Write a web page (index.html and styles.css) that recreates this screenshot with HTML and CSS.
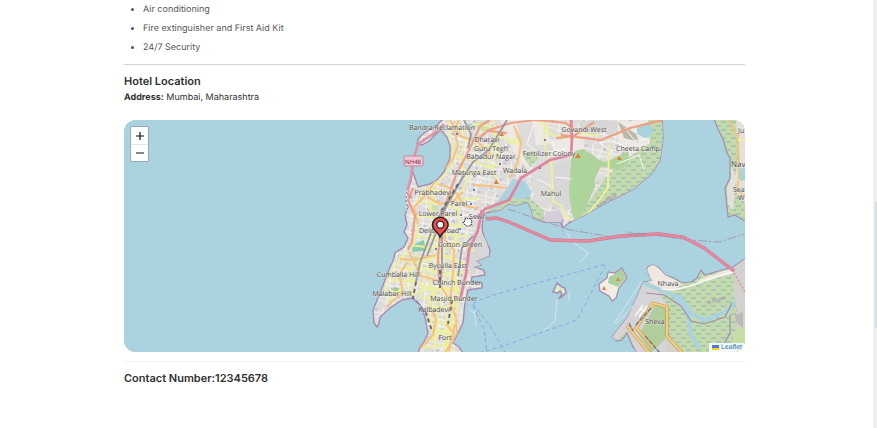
FILE: index.html
```html
<!DOCTYPE html>
<html lang="en">
<head>
<meta charset="utf-8">
<meta name="viewport" content="width=device-width, initial-scale=1">
<title>Hotel details</title>
<link rel="stylesheet" href="styles.css">
</head>
<body>
<main class="content">
  <ul class="amenities">
    <li>Air conditioning</li>
    <li>Fire extinguisher and First Aid Kit</li>
    <li>24/7 Security</li>
  </ul>
  <section class="location">
    <h2>Hotel Location</h2>
    <p><strong>Address:</strong> Mumbai, Maharashtra</p>
    <div class="map">
      <svg class="tiles" viewBox="124 120 621 232" preserveAspectRatio="xMidYMid slice" role="img" aria-label="Map of Mumbai">
        <defs>
          <pattern id="marsh" width="10" height="8" patternUnits="userSpaceOnUse">
            <rect width="10" height="8" fill="#c6d9a9"/>
            <path d="M1 2h5M6 6h4M0 6h1" stroke="#7bb7cd" stroke-width="1"/>
          </pattern>
          <pattern id="blocks" width="19" height="17" patternUnits="userSpaceOnUse" patternTransform="rotate(12)">
            <rect width="19" height="17" fill="#dedcda"/>
            <path d="M2 0l3 17M12 0l-2 17M0 6h19M0 12l19-2" stroke="#f7f5f2" stroke-width="1" fill="none"/>
            <path d="M13 2h3v3h-3zM5 13h3v2h-3z" fill="#cbc8c7"/>
          </pattern>
          <clipPath id="cityClip"><use href="#city"/></clipPath>
          <clipPath id="shevaClip"><use href="#sheva"/></clipPath>
        </defs>
        <rect x="-400" y="-100" width="1700" height="700" fill="#aad3df"/>

        <path id="city" fill="url(#blocks)" stroke="#a58bb0" stroke-width="1.4" d="M443 119L438 124L433 128L424 133L419 138L417 143L422 145L429 141L436 134L441 130L447 137L450 146L450 158L444 172L437 180L430 184L418 187L415 178L412 170L411 182L407 190L406 202L408 207L405 215L407 225L404 232L408 238L404 247L395 253L393 261L390 267L385 280L380 293L373 310L374 323L377 327L379 324L380 317L390 308L402 300L412 298L420 305L425 317L428 333L424 342L420 347L418 353H463L459 347L453 343L458 333L463 323L465 303L468 290L482 288L482 283L471 282L472 277L485 275L484 270L473 267L481 265L476 261L489 256L490 250L485 239L482 230L483 214L490 212L500 210L508 204L517 205L528 202L532 212L533 218L543 222L560 222L563 228L570 222L585 215L607 202L620 196L635 188L652 173L660 160L663 138L662 119Z"/>
        <g clip-path="url(#cityClip)" fill="none">
          <path fill="#edeae5" d="M500 120h45l6 22 32-7-4 43-24 14-10-16-20-9-14-21zM619 122l42-3-8 30-20 5-15-10z"/>
          <path fill="#dddcdb" d="M517 124l16-2 3 24-14 8zM533 146l18-2 8 12 12 2 5 20-2 32-19-5-13 3-10-18z"/>
          <path fill="#d8d7d8" d="M553 166l16-6 2 50-18-3zM578 121l30-1 2 12-24 3zM465 244l12-16 10 12 2 16-18 20zM604 122l14-1-1 11-11 2z"/>
          <path fill="url(#marsh)" d="M487 210L504 195L521 197L528 196L544 211V223H522L500 215ZM574 219L595 194L604 179L625 160L650 143L648 119H665V155L650 180L615 205L576 222ZM523 156l9-6 6 8-8 9z"/>
          <path fill="#aed49b" d="M571 160L575 151L583 149L595 156V187L580 219L573 217L569 194ZM595 158L605 162L629 151L628 163L618 171L601 166L595 178Z"/>
          <path fill="#d7cdda" d="M546 212l14-2 5 12-21 2z"/>
          <path fill="#84cdae" d="M413 245l10-5 5 3-4 8-12 1z"/>
          <path fill="#cbe0ae" d="M410 258l7-3 4 8-7 3zM473 124l9-3 9 7-8 4zM432 205l7 1-1 7-7-1zM544 161h7v3h-7zM515 135l8 3-2 5z"/>
          <path fill="#9bca8d" d="M394 287l5 1-2 6-6-1z"/>
          <path fill="#aad3df" d="M513 179l12 2 7 12-7 6-18-1-6 8-10 6 9-14zM637 126l12-4 5 10-7 7-10-5zM469 123l7 2-2 4-8-2z"/>
          <path fill="#bdb9a9" d="M618 122l18 12 3 8-15-4z"/>

          <g stroke="#faf8f5" stroke-width="1">
            <path d="M433 190l13 8 31 3M420 194l17 10 28-1M409 217l26-5 15 7 25-6M414 228l45-1 15 13M424 249l27-8 15 10M399 274l25-11 24 10 19-6M393 294l22-12 44 9M431 318l26 5M437 326l18 4M445 133l22 9 21-5M461 149l20 6 15 10M459 168l28 11M450 193l26 14M397 262l-12 29M427 280l-3 19M446 283l-5 25M535 120l-8 24 13 9 26-4M552 140l4 14M555 177l17 2M537 179l14 7M598 142l14 9 15-4M625 128l10 13 13-3"/>
            <path d="M617 164l22-9 5 15M599 143l13-2 13 5 6 9M476 132l-5 17M483 178l-11 15M455 185l-8 26"/>
          </g>
          <g stroke="#edf09c" stroke-width="2">
            <path d="M450 120l-2 14 6 13-3 19-14 18-16 10-8 18 5 22-7 13-18 21-10 26"/>
            <path d="M457 121l8 17-5 22 8 19-10 20 1 25-7 27 2 29 4 24-8 28-6 20"/>
            <path d="M423 187l11 8-5 13 10 10 17-4M432 190l14 1 14 9 20-2M421 202l23 2 16 6M416 216l16 1 10 6 22 4M414 235l23 4 10-5 22 3M409 245l26 3 24-5 16 8M399 256l16 7 29-8 21 9M398 269l28-1 16 6 24-2M391 280l24 1 11 7 32 1 6 8M391 291l21 4 16-8 34 4M386 302l20-16 6-20M423 298l36 3M427 309l31-3M430 319l26 8M431 332l24-3M426 341l18-9 12 12M421 348l27-4 5 8"/>
            <path d="M404 261l10 19-3 14M418 254l7 22-5 23M425 241l6 31-2 38M430 227l8 28-8 25 7 31M444 246l2 41 6 28M458 237l-7 19 7 33-6 22M431 284l-3 27M435 289v23M440 286l1 25M429 311l7 37M438 311l-3 37M446 311l-1 38M452 310l-5 38"/>
            <path d="M463 132l12-8 14 2 7 11 24 4M467 140l11 8 18-4 3 12-15 3M454 157l14 1 18 9 12-2M462 174l21-3M493 120l4 24-10 15 10 20M508 142l9 2M517 132l3 14M545 120l-1 22 5 17 3 8 1 34 9 5 3 10 9 5 11-4 13-15 10-14 1-43M539 121l13 14 16 3 13-1M567 122l12 11 20 3"/>
          </g>
          <g stroke="#f7c27f" stroke-width="2">
            <path d="M459 120l-5 11 4 14-5 14-15 17-11 18-13 13 4 17M450 120l10 16 18 6 13 13M438 184l15 5 12 17 13 2M427 197l13 7 13-3 10-9M443 217l2 23 9 10-1 23-3 30 6 14 1 16-12 20M400 259l13 1 23-5M407 263l-8 12 4 17-17 15M409 252l12 24 16 4 12 19M430 306l6 13-3 16-12 13M446 324l8 10M455 324l-6 27M473 185l18 1 16 2M514 126l7 17-3 18-8 17"/>
          </g>
          <path stroke="#eda084" stroke-width="2.2" d="M413 188l-5 12 7 16-3 26-4 8M490 120l-10 6-10 22-14 27-9 25-6 25-3 31 1 27M486 131l25-8 25-3 30 3 8 7M476 140l12-9 19 2M561 135l40 5 29-12 33-8M556 138l18-2 20-14"/>
          <path stroke="#df86a0" stroke-width="2.8" d="M571 119l1 20-1 16-21 5-29 18-12 22-24 9-8 9M482 210l-4 20-9 20-3 24-6 26"/>
          <path stroke="#9a979d" stroke-width="1.8" d="M464 120l7 14-3 14M507 120l-9 15-9 15-16 12-13 20-16 26-10 17-14 38-4 19M465 173l-20 36-18 47M442 230v34l-2 24M473 236l-11 12-4 28"/>
          <path stroke="#696b74" stroke-width="2" stroke-dasharray="4 3" d="M458 184l-9 15-8 12M440 270v18M416 282l-3 16 13 15 6 18M452 300l-4 24"/>
        </g>
        <path fill="none" stroke="#df91a5" stroke-width="2.6" d="M444 124l-5 6-9 6-12 8-4 13-3 20-4 17 5 4"/>
        <path fill="none" stroke="#f1edf2" stroke-width="1.300" stroke-dasharray="2 2" d="M407 190l-1 10 1 11"/>

        <path fill="url(#marsh)" stroke="#a58bb0" stroke-width="1.2" d="M714 119L718 129L723 139L727 153L730 158V178L725 188L728 217L735 215L746 222V119Z"/>
        <path fill="#e4e1dc" d="M736 120h9v83l-8-10-2-16 3-14-1-25zM731 164l5 14-3 33-5-7-1-16 4-10z"/>
        <path fill="none" stroke="#f2c174" stroke-width="2" d="M729 120l9 17 1 41-2 10 8 10"/>
        <path fill="none" stroke="#edf09c" stroke-width="2" d="M738 140h8M738 180h8"/>
        <path fill="#aad3df" d="M739 169l6-3v14l-5 1z"/>

        <path id="sheva" fill="url(#marsh)" stroke="#a58bb0" stroke-width="1.2" d="M647 270L648 267L652 265L658 267L665 275L674 278L682 283L691 282L697 278L701 270L705 275L722 270L733 267L746 258V353H638L633 347L627 333L622 340L617 341L612 337L627 318L638 295L643 282L652 281Z"/>
        <g clip-path="url(#shevaClip)" fill="none">
          <path fill="#eee8e1" d="M645 271l8-8 14 13 16 8-10 6-16-3-10-6zM697 281l11-5 25-8 2 5-18 4-17 6z"/>
          <path fill="#d6d4d6" d="M643 282l15 8 10 17-1 46h-30l-10-22-15 12-5-11z"/>
          <path fill="#afce9b" d="M655 305l12 3-2 31-14 14-12-18z"/>
          <path fill="#d3d1ce" d="M666 338l16 16h-16zM733 268l13-10v80l-12-3 5-18-5-20z"/>
          <path fill="#c5dda7" d="M735 331l10-7v29h-15z"/>
          <path fill="#bcb9bd" d="M735 315l8-3v16l-7-6z"/>
          <path stroke="#aad3df" stroke-width="4" d="M643 283l20 8 17 7 13 17 12 5 22-9 8-9M674 296l14 17 3 22 8 13"/>
          <path stroke="#a58bb0" stroke-width="1.2" d="M646 293l18 2 17 11 10 15 13 3 21-7 7-14M730 315v18l-8 15"/>
          <path stroke="#faf8f5" stroke-width="1.6" d="M661 289l12 1 17-4 20-7 23-7M643 305l-8 11M647 306l-8 11M640 309l6 3"/>
          <path stroke="#b99458" stroke-width="3.300" d="M652 303l15 4 0 29 16 18M653 303l-17 25 18 20M627 326l23 28"/>
          <path stroke="#f8cd7c" stroke-width="2.300" d="M652 303l15 4 0 29 16 18M653 303l-17 25 18 20M627 326l23 28"/>
          <path stroke="#77747c" stroke-width="1.4" stroke-dasharray="5 1" d="M651 308l-16 18M645 336l15 17M629 323l4 8"/>
        </g>

        <path fill="#f2ede7" stroke="#a58bb0" stroke-width="1.2" d="M608 272l-1 6-8 6 1 7 9 5 3 5 4-3 3-10 8-10-5-10-7 5z"/>
        <path fill="#add19e" d="M609 277l6-3 7-5 4 9-8 9-10-4z"/>
        <path fill="#ddebca" stroke="#a58bb0" stroke-width="1.5" d="M557 283l-4 9 5 1 2-2 2 3-3 5 7-6-1-5-3-1z"/>
        <path fill="none" stroke="#d9e7e7" stroke-width="1" d="M567 233l3 5-5 2M574 243l14 10-8 9M557 300l-2 21-10 9M569 292v9M474 309l2 17M469 309l6 5M642 281l-28 43M633 306l-17 18"/>
        <path fill="none" stroke="#8aa4e5" stroke-width="1" stroke-dasharray="4 3" d="M473 303l17-7 98-27 18-5-29 56-74 26-24 7M473 304l17 22 15 26M473 306l11 23 3 23"/>
        <path fill="none" stroke="#a596b7" stroke-width="1" stroke-dasharray="9 2 2 2" d="M508 209l62 21 50 8 27-4 42 6 30 2 26-8M562 219l1 16"/>
        <path fill="none" stroke="#c77594" stroke-width="3.3" d="M486 219l10-1 13 4 32 14 10 4 37 1 33-5 38-2 24 3 21 11 30 23"/>
        <path fill="none" stroke="#e6899b" stroke-width="2.3" d="M486 219l10-1 13 4 32 14 10 4 37 1 33-5 38-2 24 3 21 11 30 23"/>
        <path fill="none" stroke="#e6899b" stroke-width="1.5" stroke-dasharray="2 2" d="M734 273l11 19"/>
        <path fill="#d78340" d="M575 158l3-5 3 5zM617 160l2-4 3 4zM494 184l2-5 3 5zM499 136l3-4 2 4zM602 290l2-4 2 4zM616 281l2-4 2 4z"/>
        <path fill="#687fc1" d="M456 133h2v2h-2zM499 163h2v2h-2zM473 189h2v2h-2zM460 214h2v2h-2zM459 228h2v2h-2zM435 248h2v2h-2zM539 167h2v2h-2zM544 139h2v2h-2zM470 203h2v2h-2z"/>
        <rect x="404" y="156" width="19" height="10" rx="1" fill="#edcbd7" stroke="#c9849c" stroke-width="1"/>

        <g class="places">
          <text x="442" y="130">Bandra Reclamation</text><text x="487" y="142">Dharavi</text>
          <text x="491" y="151">Guru Tegh</text><text x="491" y="159">Bahadur Nagar</text>
          <text x="474" y="175">Matunga East</text><text x="515" y="173">Wadala</text>
          <text x="433" y="195">Prabhadevi</text><text x="459" y="206">Parel</text>
          <text x="438" y="216">Lower Parel</text><text x="478" y="219">Sewri</text>
          <text x="439" y="233">Delisle Road</text><text x="460" y="247">Cotton Green</text>
          <text x="448" y="268">Byculla East</text><text x="398" y="277">Cumballa Hill</text>
          <text x="457" y="285">Chinch Bunder</text><text x="392" y="296">Malabar Hill</text>
          <text x="454" y="301">Masjid Bunder</text><text x="434" y="312">Kalbadevi</text>
          <text x="445" y="340">Fort</text><text x="584" y="132">Govandi West</text>
          <text x="549" y="156">Fertilizer Colony</text><text x="638" y="151">Cheeta Camp</text>
          <text x="551" y="196">Mahul</text><text x="668" y="286">Nhava</text><text x="655" y="324">Sheva</text>
          <text class="start" x="738" y="133">Ju</text><text class="town" x="731" y="167">Nav</text>
          <text class="start" x="733" y="192">Sea</text><text class="start" x="738" y="200">W</text>
          <text class="road" x="413" y="164">NH48</text>
          <text class="district" x="636" y="236">Thane</text>
          <text class="district" transform="translate(717 302) rotate(-18)">n River</text>
          <text class="district" transform="translate(608 202) rotate(-34)">Mumbai</text>
        </g>
        <path fill="#ec4b46" stroke="#272326" stroke-width="1.5" d="M440 237c-1-4-7.500-7-7.500-12a7.800 7.800 0 0 1 15.600 0c0 5-6.600 8-8.100 12z"/>
        <circle cx="440.300" cy="224.700" r="3.500" fill="#eef2fa" stroke="#272326" stroke-width="1.300"/>
        <path fill="#fff" stroke="#171717" stroke-width="1" stroke-dasharray="1.500 1" d="M465 219l2-1 1 1 2-1 1 2 1 1-1 4-2 1h-3l-3-4 2-1z"/>
      </svg>
      <div class="zoom-controls">
        <button type="button" aria-label="Zoom in"><svg viewBox="0 0 10 10"><path d="M1 5h8M5 1v8"/></svg></button>
        <button type="button" aria-label="Zoom out"><svg viewBox="0 0 10 10"><path d="M1 5h8"/></svg></button>
      </div>
      <a class="attribution" href="#"><svg viewBox="0 0 7 5"><path fill="#4c7be1" d="M0 0h7v3H0z"/><path fill="#ffd500" d="M0 3h7v2H0z"/></svg>Leaflet</a>
    </div>
  </section>
  <section class="contact"><h2>Contact Number:12345678</h2></section>
</main>
<div class="scroll-track" aria-hidden="true"><div class="scroll-thumb"></div></div>
</body>
</html>
```
FILE: styles.css
```css
* { box-sizing: border-box; }
body {
  display: flex;
  min-height: 100vh;
  margin: 0;
  background: #fff;
  color: #303030;
  font: 9px/18px Inter, sans-serif;
  text-rendering: geometricPrecision;
}
h2, p, ul { margin: 0; }
h2 { font-size: 11px; line-height: 16px; font-weight: 600; }
.content { flex: 0 1 621px; min-width: 0; margin: 0 auto; }
.amenities {
  display: grid;
  gap: 1px;
  padding: 1px 0 7px 19px;
  color: #555;
}
.location { padding-top: 8px; border-top: 1px solid #d4d4d4; }
.map {
  position: relative;
  height: 232px;
  margin-top: 13px;
  overflow: hidden;
  border-radius: 12px;
  background: #aad3df;
}
.tiles { display: block; width: 100%; height: 100%; }
.places text {
  fill: #484848;
  stroke: #f5f2ed;
  stroke-opacity: .6;
  stroke-width: 1px;
  paint-order: stroke;
  font: 7px "Open Sans", "Noto Sans", sans-serif;
  text-anchor: middle;
}
.places .town { font-size: 8px; text-anchor: start; }
.places .start { text-anchor: start; }
.places .road { fill: #a53e64; stroke: none; font-size: 6px; font-weight: 600; }
.places .district { fill: #a187ae; stroke: none; font-size: 6px; }
.zoom-controls {
  position: absolute;
  top: 6px;
  left: 6px;
  width: 19px;
  border: 1px solid #8fafb8;
  border-radius: 2px;
  overflow: hidden;
}
.zoom-controls button {
  display: grid;
  place-items: center;
  width: 100%;
  height: 17px;
  padding: 0;
  border: 0;
  background: #fff;
}
.zoom-controls button + button { border-top: 1px solid #e5e5e5; }
.zoom-controls svg { width: 10px; height: 10px; stroke: #111; stroke-width: 1.2; }
.attribution {
  position: absolute;
  right: 0;
  bottom: 0;
  display: flex;
  align-items: center;
  gap: 2px;
  padding: 0 3px;
  background: #f3f7f8;
  color: #2479a6;
  font: 7px/9px "Liberation Sans", sans-serif;
  text-decoration: none;
}
.attribution svg { width: 7px; height: 5px; }
.contact { margin-top: 9px; padding-top: 8px; border-top: 1px solid #f3f3f3; }
.scroll-track {
  flex: 0 0 4px;
  margin-left: 4px;
  padding: 202px 0 0 2px;
  background: #eeeeea;
}
.scroll-thumb { height: 126px; background: #d5dee2; }
```
